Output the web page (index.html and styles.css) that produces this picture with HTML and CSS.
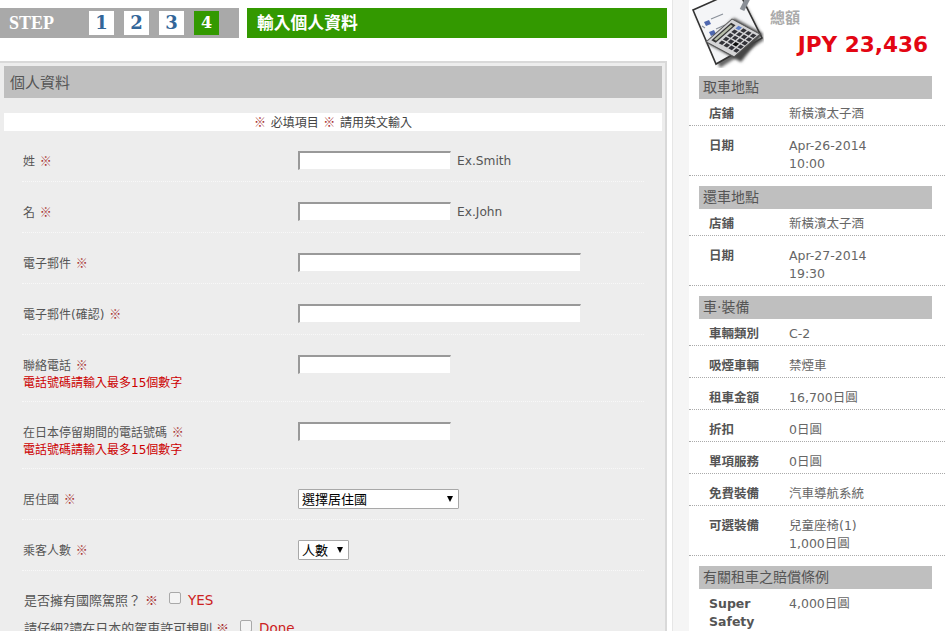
FILE: index.html
```html
<!DOCTYPE html>
<html lang="zh-Hant">
<head>
<meta charset="utf-8">
<title>輸入個人資料</title>
<link rel="stylesheet" href="styles.css">
</head>
<body>
<div class="page">
  <main class="main">
    <header class="steps">
      <div class="stepbar">
        <span class="steplabel">STEP</span>
        <span class="stepnum">1</span>
        <span class="stepnum">2</span>
        <span class="stepnum">3</span>
        <span class="stepnum current">4</span>
      </div>
      <h1 class="steptitle">輸入個人資料</h1>
    </header>
    <section class="panel">
      <h2 class="panelhead">個人資料</h2>
      <p class="notice"><span class="req">※</span> 必填項目 <span class="req">※</span> 請用英文輸入</p>
      <div class="row"><div class="label"><span class="line">姓 <span class="req">※</span></span></div><div class="field"><input class="input short" type="text"><span class="hint">Ex.Smith</span></div></div>
      <div class="row"><div class="label"><span class="line">名 <span class="req">※</span></span></div><div class="field"><input class="input short" type="text"><span class="hint">Ex.John</span></div></div>
      <div class="row"><div class="label"><span class="line">電子郵件 <span class="req">※</span></span></div><div class="field"><input class="input wide" type="text"></div></div>
      <div class="row"><div class="label"><span class="line">電子郵件(確認) <span class="req">※</span></span></div><div class="field"><input class="input wide" type="text"></div></div>
      <div class="row"><div class="label"><span class="line">聯絡電話 <span class="req">※</span></span><span class="note">電話號碼請輸入最多15個數字</span></div><div class="field"><input class="input short" type="text"></div></div>
      <div class="row"><div class="label"><span class="line">在日本停留期間的電話號碼 <span class="req">※</span></span><span class="note">電話號碼請輸入最多15個數字</span></div><div class="field"><input class="input short" type="text"></div></div>
      <div class="row"><div class="label"><span class="line">居住國 <span class="req">※</span></span></div><div class="field"><span class="selectwrap country"><select class="select"><option>選擇居住國</option></select></span></div></div>
      <div class="row"><div class="label"><span class="line">乘客人數 <span class="req">※</span></span></div><div class="field"><span class="selectwrap people"><select class="select"><option>人數</option></select></span></div></div>
      <div class="checks">
        <div class="checkrow">是否擁有國際駕照？ <span class="req">※</span><input class="check" type="checkbox"><span class="checktext">YES</span></div>
        <div class="checkrow">請仔細?讀在日本的駕車許可規則 <span class="req">※</span><input class="check" type="checkbox"><span class="checktext">Done</span></div>
      </div>
    </section>
  </main>
  <aside class="side">
    <div class="total">
      <svg class="icon" width="72" height="68" viewBox="0 0 72 68" aria-hidden="true">
        <defs><filter id="soft" x="-20%" y="-20%" width="140%" height="140%"><feGaussianBlur stdDeviation="1.6"/></filter><filter id="tiny"><feGaussianBlur stdDeviation="0.3"/></filter></defs>
        <polygon points="3,13 47,-8 72,40 28,68" fill="#666" filter="url(#soft)"/>
        <g filter="url(#tiny)">
          <polygon points="1,10 46,-10 70,38 24,64" fill="#f4f5f7" stroke="#333" stroke-width="1.6"/>
          <path d="M12 22l5-2 2 4-5 2zM17 32l5-2 2 4-5 2z" fill="#5068b0"/>
          <path d="M19 19l12-5M24 29l9-4M10 26l3 2M23 41l12-6M27 49l10-5" stroke="#8a909a" stroke-width="1.2" fill="none"/>
          <path d="M50 10L58 -6" stroke="#8a8f96" stroke-width="5"/>
          <polygon points="42,18 71,34 49,62 15,43" fill="#444" filter="url(#soft)"/>
          <g transform="matrix(.875 .47 -.76 .67 40 19)">
            <rect x="0" y="0" width="32" height="34" fill="#d4d4d6" stroke="#555" stroke-width="1"/>
            <rect x="2.5" y="4" width="5" height="26" fill="#333"/>
            <rect x="3.8" y="6" width="2.4" height="22" fill="#b8beaa"/>
            <g fill="#333338">
              <rect x="10" y="3" width="4" height="4" fill="#6080c8"/><rect x="15.500" y="3" width="4" height="4"/><rect x="21" y="3" width="4" height="4"/><rect x="26.500" y="3" width="4" height="4"/>
              <rect x="10" y="8.500" width="4" height="4"/><rect x="15.500" y="8.500" width="4" height="4"/><rect x="21" y="8.500" width="4" height="4"/><rect x="26.500" y="8.500" width="4" height="4"/>
              <rect x="10" y="14" width="4" height="4"/><rect x="15.500" y="14" width="4" height="4"/><rect x="21" y="14" width="4" height="4"/><rect x="26.500" y="14" width="4" height="4"/>
              <rect x="10" y="19.500" width="4" height="4"/><rect x="15.500" y="19.500" width="4" height="4"/><rect x="21" y="19.500" width="4" height="4" fill="#111"/><rect x="26.500" y="19.500" width="4" height="4"/>
              <rect x="10" y="25" width="4" height="4"/><rect x="15.500" y="25" width="4" height="4"/><rect x="21" y="25" width="4" height="4"/><rect x="26.500" y="25" width="4" height="4"/>
            </g>
          </g>
        </g>
      </svg>
      <div class="totaltext">
        <div class="totallabel">總額</div>
        <div class="totalprice">JPY 23,436</div>
      </div>
    </div>

    <h3 class="sidehead">取車地點</h3>
    <dl class="info">
      <div class="item"><dt>店鋪</dt><dd>新橫濱太子酒</dd></div>
      <div class="item"><dt>日期</dt><dd>Apr-26-2014<br>10:00</dd></div>
    </dl>
    <h3 class="sidehead">還車地點</h3>
    <dl class="info">
      <div class="item"><dt>店鋪</dt><dd>新橫濱太子酒</dd></div>
      <div class="item"><dt>日期</dt><dd>Apr-27-2014<br>19:30</dd></div>
    </dl>
    <h3 class="sidehead">車‧裝備</h3>
    <dl class="info">
      <div class="item"><dt>車輛類別</dt><dd>C-2</dd></div>
      <div class="item"><dt>吸煙車輛</dt><dd>禁煙車</dd></div>
      <div class="item"><dt>租車金額</dt><dd>16,700日圓</dd></div>
      <div class="item"><dt>折扣</dt><dd>0日圓</dd></div>
      <div class="item"><dt>單項服務</dt><dd>0日圓</dd></div>
      <div class="item"><dt>免費裝備</dt><dd>汽車導航系統</dd></div>
      <div class="item"><dt>可選裝備</dt><dd>兒童座椅(1)<br>1,000日圓</dd></div>
    </dl>
    <h3 class="sidehead">有關租車之賠償條例</h3>
    <dl class="info">
      <div class="item"><dt>Super<br>Safety</dt><dd>4,000日圓</dd></div>
    </dl>
  </aside>
</div>
</body>
</html>
```

FILE: styles.css
```css
html, body {
  margin: 0;
  padding: 0;
  height: 631px;
  overflow: hidden;
  background: #fff;
}
body {
  font-family: "DejaVu Sans", "Noto Sans CJK TC", sans-serif;
  font-size: 12px;
  line-height: 18px;
  color: #555;
}
.page {
  display: flex;
  height: 631px;
  overflow: hidden;
}
.main {
  width: 667px;
  flex: none;
}
.steps {
  display: flex;
  gap: 8px;
  height: 30px;
  margin-top: 8px;
}
.stepbar {
  width: 239px;
  flex: none;
  display: flex;
  align-items: center;
  gap: 10px;
  background: #a9a9a9;
  box-sizing: border-box;
}
.steplabel {
  width: 80px;
  box-sizing: border-box;
  padding-left: 9px;
  margin-right: -1px;
  color: #fff;
  font: bold 18px/31px "Liberation Serif", serif;
}
.stepnum {
  width: 25px;
  height: 24px;
  background: #fff;
  color: #336699;
  text-align: center;
  font: bold 18px/24px "DejaVu Serif", serif;
}
.stepnum.current {
  background: #339900;
  color: #fff;
  font-size: 16px;
}
.steptitle {
  flex: 1;
  margin: 0;
  padding-left: 10px;
  background: #339900;
  color: #fff;
  font: bold 16.800px/28px "Noto Sans CJK TC", sans-serif;
}
.panel {
  margin-top: 23px;
  height: 570px;
  box-sizing: border-box;
  padding: 3px 3px 0 4px;
  background: #ededed;
  border-top: 2px solid #d9d9d9;
  border-right: 2px solid #d9d9d9;
  overflow: hidden;
}
.panelhead {
  margin: 0;
  height: 32px;
  padding-left: 6px;
  background: #bfbfbf;
  color: #555;
  font: normal 15px/32px "Noto Sans CJK TC", sans-serif;
}
.notice {
  margin: 15px 0 0;
  height: 18px;
  background: #fff;
  text-align: center;
  font: 12px/18px "Noto Sans CJK TC", sans-serif;
  word-spacing: 2px;
  color: #444;
}
.req {
  color: #a83232;
  font-family: "Noto Sans CJK TC", sans-serif;
}
.row {
  display: grid;
  grid-template-columns: 276px 1fr;
  width: 622px;
  margin-left: 18px;
  padding: 20px 0 10px;
  min-height: 20px;
  border-bottom: 1px dotted #f8f8f8;
}
.label {
  padding-left: 1px;
  padding-top: 1px;
  box-sizing: border-box;
  word-spacing: 1px;
}
.line {
  display: block;
  height: 18px;
}
.note {
  display: block;
  height: 17px;
  color: #cc0000;
}
.field {
  display: flex;
  align-items: flex-start;
}
.input {
  height: 19px;
  padding: 0;
  margin: 0;
  box-sizing: border-box;
  background: #fff;
  border-style: solid;
  border-width: 2px 1px 1px 2px;
  border-color: #999 #ededed #ededed #999;
  border-radius: 0;
}
.short { width: 153px; }
.wide { width: 283px; }
.hint {
  margin-left: 6px;
  font-size: 12.200px;
  line-height: 21px;
  height: 19px;
}
.selectwrap {
  position: relative;
  display: block;
  height: 20px;
}
.selectwrap::after {
  content: "";
  position: absolute;
  top: 7px;
  right: 6px;
  border-style: solid;
  border-width: 6px 3.500px 0;
  border-color: #000 transparent transparent;
  pointer-events: none;
}
.country { width: 161px; }
.people { width: 51px; }
.select {
  appearance: none;
  display: block;
  width: 100%;
  height: 20px;
  margin: 0;
  padding: 0 0 0 3px;
  box-sizing: border-box;
  border: 1px solid #a8a8a8;
  border-radius: 1px;
  background: #fff;
  color: #000;
  font: 13px/18px "Noto Sans CJK TC", sans-serif;
}
.checks {
  margin-left: 20px;
  padding-top: 20px;
}
.checkrow {
  height: 28px;
  font: 13px/18px "Noto Sans CJK TC", sans-serif;
  word-spacing: 1px;
}
.check {
  appearance: none;
  width: 12px;
  height: 12px;
  margin: 0 7px 0 11px;
  vertical-align: 1px;
  box-sizing: border-box;
  border: 1px solid #a9a9a9;
  border-radius: 2px;
  background: #f4f4f4;
}
.checktext {
  color: #cc2222;
  font-family: "DejaVu Sans", sans-serif;
  font-size: 13.500px;
}
.side {
  width: 273px;
  flex: none;
  margin-left: 5px;
  box-sizing: border-box;
  height: 631px;
  background: #fff;
  border-left: 1px solid #e6e6e6;
  overflow: hidden;
  padding-left: 16px;
  background-image: linear-gradient(#f5f5f5, #f5f5f5);
  background-size: 16px 100%;
  background-repeat: no-repeat;
}
.total {
  display: flex;
  height: 76px;
}
.icon {
  flex: none;
  margin-left: 3px;
  display: block;
}
.totaltext {
  margin-left: 6px;
  width: 158px;
}
.totallabel {
  margin-top: 8px;
  color: #aaa;
  font: bold 15px/18px "Noto Sans CJK TC", sans-serif;
}
.totalprice {
  margin-top: 6px;
  text-align: right;
  color: #e30613;
  font: bold 21.600px/26px "DejaVu Sans", sans-serif;
}
.sidehead {
  margin: 0;
  width: 233px;
  margin-left: 10px;
  height: 23px;
  padding-left: 4px;
  box-sizing: border-box;
  background: #bfbfbf;
  color: #555;
  font: normal 14px/22px "DejaVu Sans", "Noto Sans CJK TC", sans-serif;
}
.info {
  margin: 0 0 10px;
  padding-top: 0;
}
.item {
  display: flex;
  padding: 11px 0 2px 20px;
  border-bottom: 1px dotted #aaa;
}
.item:first-child {
  padding-top: 6px;
}
.info dt {
  width: 80px;
  flex: none;
  font-weight: bold;
  font-size: 12.500px;
  color: #555;
}
.info dd {
  margin: 0;
  color: #666;
  font-size: 12.500px;
}
```
